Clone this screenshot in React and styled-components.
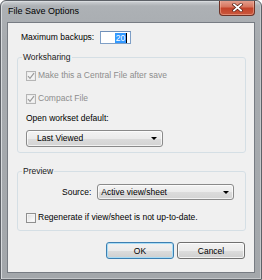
import styled, { createGlobalStyle } from 'styled-components'

const GlobalStyle = createGlobalStyle`
  html, body {
    margin: 0;
    padding: 0;
    background: #fff;
  }
  body {
    font-family: "Liberation Sans", Arial, sans-serif;
    font-size: 8.5px;
    color: #000;
  }
`

const Window = styled.div`
  width: 262px;
  height: 280px;
  box-sizing: border-box;
  display: flex;
  flex-direction: column;
  background: linear-gradient(to bottom, #cfd2d5 0, #adb1b5 5px, #a7abaf 40px, #a3a7ab 100%);
  border: 1px solid #5d6167;
  border-radius: 6px 6px 0 0;
  box-shadow: inset 1px 1px 0 #d8dbde, inset -1px -1px 0 #c4c7ca;
  overflow: hidden;
`

const TitleBar = styled.div`
  height: 21px;
  flex: none;
  display: flex;
  justify-content: space-between;
  align-items: flex-start;
  padding: 0 6px 0 7px;
`

const Title = styled.div`
  margin-top: 4px;
  font-size: 9px;
  line-height: 12px;
  color: #000;
`

const CloseButton = styled.div`
  width: 36px;
  height: 16px;
  margin-top: -1px;
  box-sizing: border-box;
  display: flex;
  align-items: center;
  justify-content: center;
  border: 1px solid #6e3327;
  border-top: none;
  border-radius: 0 0 4px 4px;
  background: linear-gradient(to bottom, #e6a595 0, #d7765f 45%, #c4432a 55%, #c9583d 100%);
  box-shadow: inset 0 0 0 1px rgba(255, 200, 180, 0.45);
`

const Client = styled.div`
  flex: 1;
  margin: 0 6px 6px;
  border: 1px solid #777c83;
  background: #f0f0f0;
  padding: 8px 8px 0 9px;
  display: flex;
  flex-direction: column;
`

const Row = styled.div`
  display: flex;
  align-items: center;
  gap: 6px;
  padding-left: ${p => p.$indent || 0}px;
  margin-top: ${p => p.$mt || 0}px;
  height: ${p => p.$h}px;
`

const Label = styled.span`
  line-height: 11px;
  white-space: nowrap;
`

const NumberBox = styled.div`
  width: 31px;
  height: 13px;
  box-sizing: border-box;
  border: 1px solid #7f9fc6;
  border-top-color: #6f8fb8;
  background: #fff;
  display: flex;
  justify-content: flex-end;
  align-items: center;
  padding-right: 3px;
`

const Selected = styled.span`
  background: #3399ff;
  color: #fff;
  line-height: 10px;
  padding: 0 1px;
`

const Caret = styled.span`
  width: 1px;
  height: 10px;
  background: #000;
`

const Group = styled.fieldset`
  margin: ${p => p.$mt}px 0 0;
  padding: 0 8px ${p => p.$pb}px;
  border: 1px solid #d5dfe5;
  border-radius: 3px;
  min-width: 0;
  display: flex;
  flex-direction: column;
  align-items: flex-start;
`

const Legend = styled.legend`
  padding: 0 1px;
  margin-left: -4px;
  line-height: 11px;
  color: #1a1a1a;
`

const CheckRow = styled.label`
  display: flex;
  align-items: center;
  gap: 2px;
  height: 11px;
  margin-top: ${p => p.$mt}px;
  color: ${p => (p.$disabled ? '#8d8d8d' : '#000')};
  line-height: 11px;
`

const Box = styled.span`
  width: 10px;
  height: 10px;
  box-sizing: border-box;
  display: flex;
  align-items: center;
  justify-content: center;
  border: 1px solid ${p => (p.$disabled ? '#b5b5b5' : '#8f8f8f')};
  background: ${p =>
    p.$disabled
      ? '#f4f4f4'
      : 'linear-gradient(135deg, #dcdcdc 0, #f6f6f6 70%, #fff 100%)'};
  box-shadow: inset 0 0 0 1px ${p => (p.$disabled ? '#ececec' : '#f4f4f4')};
`

const Select = styled.div`
  width: 137px;
  height: ${p => p.$h}px;
  margin-top: ${p => p.$mt || 0}px;
  box-sizing: border-box;
  display: flex;
  align-items: center;
  justify-content: space-between;
  padding: 0 ${p => p.$pr}px 0 ${p => p.$pl}px;
  border: 1px solid #8a8a8a;
  border-radius: 3px;
  background: linear-gradient(to bottom, #f3f3f3 0, #ebebeb 50%, #dcdcdc 51%, #d3d3d3 100%);
  box-shadow: inset 0 0 0 1px rgba(255, 255, 255, 0.7);
  line-height: 11px;
`

const Arrow = styled.span`
  width: 0;
  height: 0;
  border-left: 3px solid transparent;
  border-right: 3px solid transparent;
  border-top: 3px solid #000;
`

const ButtonRow = styled.div`
  display: flex;
  justify-content: flex-end;
  gap: 3px;
  margin-top: 11px;
  padding-right: 1px;
`

const Button = styled.button`
  width: 68px;
  height: 17px;
  padding: 0;
  font: inherit;
  font-size: 8.5px;
  color: #000;
  border: 1px solid ${p => (p.$default ? '#3c7fb1' : '#707070')};
  border-radius: 3px;
  background: linear-gradient(to bottom, #f2f2f2 0, #ebebeb 50%, #dddddd 51%, #cfcfcf 100%);
  box-shadow: inset 0 0 0 1px ${p => (p.$default ? '#a9dcf5' : 'rgba(255,255,255,0.75)')};
`

const Check = ({ color }) => (
  <svg width="8" height="8" viewBox="0 0 8 8">
    <path d="M1 4.2 L3 6.3 L7 1.2" fill="none" stroke={color} strokeWidth="1.2" />
  </svg>
)

const CheckOption = ({ checked, disabled, mt, children }) => (
  <CheckRow $mt={mt} $disabled={disabled}>
    <Box $disabled={disabled}>{checked && <Check color={disabled ? '#9a9a9a' : '#333'} />}</Box>
    {children}
  </CheckRow>
)

export default function App() {
  return (
    <>
      <GlobalStyle />
      <Window>
        <TitleBar>
          <Title>File Save Options</Title>
          <CloseButton>
            <svg width="11" height="9" viewBox="0 0 11 9">
              <path d="M2 1.5 L9 7.5 M9 1.5 L2 7.5" stroke="#5a2418" strokeWidth="3.2" strokeLinecap="square" />
              <path d="M2 1.5 L9 7.5 M9 1.5 L2 7.5" stroke="#fff" strokeWidth="1.8" strokeLinecap="square" />
            </svg>
          </CloseButton>
        </TitleBar>
        <Client>
          <Row $indent={4} $h={13}>
            <Label>Maximum backups:</Label>
            <NumberBox>
              <Selected>20</Selected>
              <Caret />
            </NumberBox>
          </Row>

          <Group $mt={8} $pb={5}>
            <Legend>Worksharing</Legend>
            <CheckOption mt={7} checked disabled>
              Make this a Central File after save
            </CheckOption>
            <CheckOption mt={12} checked disabled>
              Compact File
            </CheckOption>
            <Label style={{ marginTop: 9 }}>Open workset default:</Label>
            <Select $mt={6} $h={17} $pl={10} $pr={5}>
              Last Viewed
              <Arrow />
            </Select>
          </Group>

          <Group $mt={13} $pb={7}>
            <Legend>Preview</Legend>
            <Row $indent={36} $mt={7} $h={16}>
              <Label>Source:</Label>
              <Select $h={16} $pl={3} $pr={4}>
                Active view/sheet
                <Arrow />
              </Select>
            </Row>
            <CheckOption mt={12}>Regenerate if view/sheet is not up-to-date.</CheckOption>
          </Group>

          <ButtonRow>
            <Button $default>OK</Button>
            <Button>Cancel</Button>
          </ButtonRow>
        </Client>
      </Window>
    </>
  )
}
